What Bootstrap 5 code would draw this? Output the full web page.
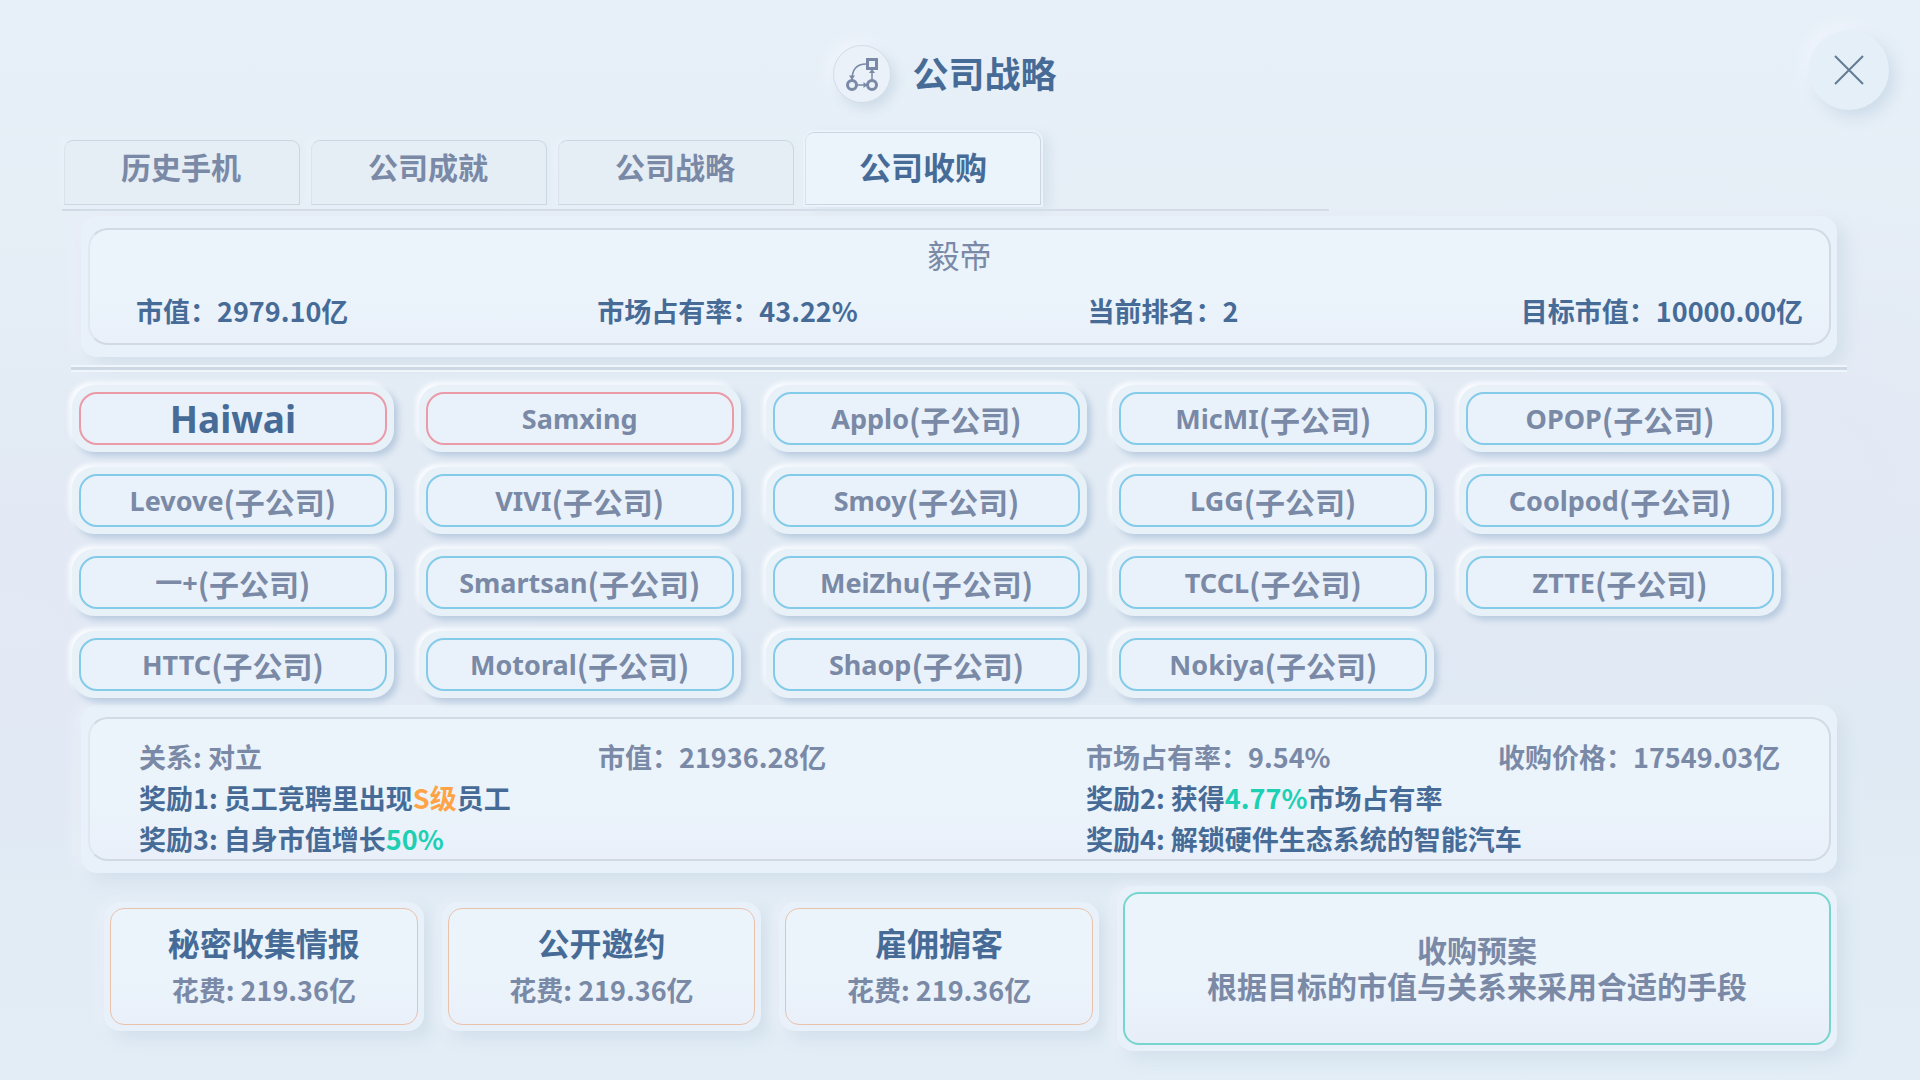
<!DOCTYPE html>
<html lang="zh-CN">
<head>
<meta charset="utf-8">
<meta name="viewport" content="width=device-width, initial-scale=1">
<title>公司战略</title>
<link href="https://cdn.jsdelivr.net/npm/bootstrap@5.3.0/dist/css/bootstrap.min.css" rel="stylesheet">
<style>
:root { --ink: #476b97; --muted: #7a89a6; --face: #ebf3fb; --line: #cdd6e2; }
body {
  font-family: "Noto Sans CJK SC", "Noto Sans", sans-serif;
  font-weight: 700; color: var(--muted); min-height: 100vh;
  background:
    radial-gradient(ellipse 900px 300px at 0% 58%, #e3e9f5 0%, rgba(227,233,245,0) 100%),
    radial-gradient(ellipse 600px 300px at 88% 44%, #e3e9f5 0%, rgba(227,233,245,0) 100%),
    linear-gradient(#e7f0f8 0%, #e6eef6 20%, #dfe9f3 60%, #e1ecf5 85%, #e2edf6 100%);
}
button { font-weight: 700; color: var(--muted); border: 0; background: none; padding: 0; }
.ink { color: var(--ink); }
.topbar { padding: 30px 31px 0 0; }
.emblem { width: 58px; height: 58px; background: #eaf1f8; border: 1px solid #d3dde9;
  box-shadow: 5px 6px 12px #cfdde9, -5px -5px 12px #f1f5fb; }
.emblem svg { display: block; }
.page-title { font-size: 36px; line-height: 40px; font-weight: 700; margin: 0; padding: 0 0 4px 22px; }
.close-btn { width: 80px; height: 80px; background: #e5eff7;
  box-shadow: 6px 7px 16px #cddcea, -5px -5px 12px #f1f5fc; }
.tabs { width: 66%; margin: 22px 0 0 62px; padding: 0 0 4px 2px; gap: 11px; border-bottom: 2px solid #cfdae5; }
.tabs .tab { flex: 0 0 236px; height: 65px; font-size: 30px; line-height: 40px; padding: 0 2px 14px 0;
  border: 1px solid #cbd6e2; border-left-color: #dae3ec; border-radius: 9px 9px 0 0; background: #e5edf5;
  box-shadow: 3px -1px 3px #e3eff3, -3px -2px 7px #ebf1f9; }
.tabs .tab.active { height: 73px; font-size: 32px; padding: 0 0 6px; color: var(--ink); background: var(--face);
  box-shadow: 0 0 0 2px #ebf2fa, 8px 3px 12px #d4e1ec; }
.plate { background: #e8f1f9; border-radius: 16px; box-shadow: 8px 8px 16px #d3e0eb, -6px 0 12px #ebeff9; }
.inset { border: 2px solid #d0d9e4; border-left-color: #dfe7f1; background: linear-gradient(#ebf3fb 60%, #e9f0f9); border-radius: 20px; }
.panels { padding-top: 5px; }
.wide-plate { margin: 0 83px 0 81px; padding: 12px 6px 12px 7px; }
.owner { font-size: 32px; line-height: 40px; font-weight: 400; padding-top: 4px; }
.facts { display: grid; grid-template-columns: 461fr 490fr 433fr 308fr; font-size: 27px; line-height: 42px; white-space: nowrap; }
.facts.own { padding: 16px 0 11px 46px; }
.facts.rival { padding: 17px 0 0 49px; line-height: 41px; grid-template-columns: 459fr 488fr 412fr 331fr; }
.wide-cell { grid-column: span 2; }
.divider { height: 7px; margin: 8px 73px 13px 71px; background: #cdd8e5; border: solid #eff5fb; border-width: 2px 0; }
.firms { display: grid; grid-template-columns: repeat(5, 1fr); gap: 15px 25px; margin: 0 139px 7px 72px; }
.firm { height: 67px; padding: 7px; border-radius: 22px; background: #e8f1f8;
  box-shadow: 4px 4px 6px #b9cbdf, -3px -3px 4px #fafcff; font-size: 27px; line-height: 40px; }
.firm > span { display: flex; align-items: center; justify-content: center; height: 100%;
  border: 2px solid #84cbea; border-radius: 18px; background: #e9f2fa; font-family: "Noto Sans", "Noto Sans CJK SC", sans-serif; }
.firm.foe > span { border-color: #eb9aa8; }
.firm .sub { font-size: 30px; font-family: "Noto Sans CJK SC", sans-serif; }
.firm.chosen { font-size: 37px; color: var(--ink); }
.deals { margin: 13px 83px 0 104px; gap: 18px; }
.deal { flex: 308 1 0; height: 129px; margin-top: 16px; padding: 6px; border-radius: 16px; }
.deal > span { display: flex; flex-direction: column; justify-content: center; height: 100%; gap: 7px;
  border: 1px solid #eac2ac; border-radius: 14px; background: linear-gradient(#ebf3fb 60%, #e9f0f9); }
.deal strong { font-size: 32px; line-height: 40px; font-weight: 700; color: var(--ink); }
.deal .cost { font-size: 27px; line-height: 42px; }
.plan { flex: 709 1 0; height: 165px; padding: 6px; font-size: 30px; line-height: 36px; }
.plan > div { height: 100%; padding-bottom: 4px; border: 2px solid #76d5cd; border-radius: 16px; background: linear-gradient(#ebf3fb 60%, #e7eef8); }
.gold { color: #ffa347; }
.teal { color: #1dd0b4; }
</style>
</head>
<body>
<header class="topbar d-flex align-items-center">
  <div class="flex-fill w-25"></div>
  <div class="d-flex align-items-center flex-shrink-0 pt-2">
    <div class="emblem rounded-circle d-flex align-items-center justify-content-center">
      <svg width="34" height="34" viewBox="0 0 34 34" fill="none" stroke="#7a89a6" aria-hidden="true">
        <rect x="22.500" y="2.500" width="9" height="9" stroke-width="3"/>
        <circle cx="7" cy="28" r="4.500" stroke-width="3"/>
        <circle cx="27" cy="28" r="4.500" stroke-width="3"/>
        <path d="M21 7C12 7 7 12 7 23M27 13v10M12 28h10" stroke-width="1.500"/>
        <path d="M4 18.500h6L7 23zM24 16h6l-3-4zM18.500 25v6l4-3z" fill="#7a89a6" stroke="none"/>
      </svg>
    </div>
    <h1 class="page-title ink">公司战略</h1>
  </div>
  <div class="flex-fill w-25 d-flex justify-content-end">
    <button type="button" class="close-btn rounded-circle d-flex align-items-center justify-content-center" aria-label="关闭">
      <svg width="30" height="30" viewBox="0 0 30 30" stroke="#637c94" stroke-width="2" aria-hidden="true"><path d="M1 1L29 29M29 1L1 29"/></svg>
    </button>
  </div>
</header>

<main>
  <div class="tabs d-flex align-items-end" role="tablist">
    <button type="button" class="tab" role="tab" aria-selected="false">历史手机</button>
    <button type="button" class="tab" role="tab" aria-selected="false">公司成就</button>
    <button type="button" class="tab" role="tab" aria-selected="false">公司战略</button>
    <button type="button" class="tab active" role="tab" aria-selected="true">公司收购</button>
  </div>

  <div class="panels">
    <section class="plate wide-plate">
      <div class="inset">
        <h2 class="owner text-center m-0">毅帝</h2>
        <div class="facts own ink">
          <div>市值：2979.10亿</div>
          <div>市场占有率：43.22%</div>
          <div>当前排名：2</div>
          <div>目标市值：10000.00亿</div>
        </div>
      </div>
    </section>

    <div class="divider"></div>

    <section class="firms">
      <button type="button" class="firm foe chosen"><span>Haiwai</span></button>
      <button type="button" class="firm foe"><span>Samxing</span></button>
      <button type="button" class="firm"><span>Applo<span class="sub">(子公司)</span></span></button>
      <button type="button" class="firm"><span>MicMI<span class="sub">(子公司)</span></span></button>
      <button type="button" class="firm"><span>OPOP<span class="sub">(子公司)</span></span></button>
      <button type="button" class="firm"><span>Levove<span class="sub">(子公司)</span></span></button>
      <button type="button" class="firm"><span>VIVI<span class="sub">(子公司)</span></span></button>
      <button type="button" class="firm"><span>Smoy<span class="sub">(子公司)</span></span></button>
      <button type="button" class="firm"><span>LGG<span class="sub">(子公司)</span></span></button>
      <button type="button" class="firm"><span>Coolpod<span class="sub">(子公司)</span></span></button>
      <button type="button" class="firm"><span>一+<span class="sub">(子公司)</span></span></button>
      <button type="button" class="firm"><span>Smartsan<span class="sub">(子公司)</span></span></button>
      <button type="button" class="firm"><span>MeiZhu<span class="sub">(子公司)</span></span></button>
      <button type="button" class="firm"><span>TCCL<span class="sub">(子公司)</span></span></button>
      <button type="button" class="firm"><span>ZTTE<span class="sub">(子公司)</span></span></button>
      <button type="button" class="firm"><span>HTTC<span class="sub">(子公司)</span></span></button>
      <button type="button" class="firm"><span>Motoral<span class="sub">(子公司)</span></span></button>
      <button type="button" class="firm"><span>Shaop<span class="sub">(子公司)</span></span></button>
      <button type="button" class="firm"><span>Nokiya<span class="sub">(子公司)</span></span></button>
    </section>

    <section class="plate wide-plate">
      <div class="inset">
        <div class="facts rival">
          <div>关系: 对立</div>
          <div>市值：21936.28亿</div>
          <div>市场占有率：9.54%</div>
          <div>收购价格：17549.03亿</div>
          <div class="wide-cell ink">奖励1: 员工竞聘里出现<span class="gold">S级</span>员工</div>
          <div class="wide-cell ink">奖励2: 获得<span class="teal">4.77%</span>市场占有率</div>
          <div class="wide-cell ink">奖励3: 自身市值增长<span class="teal">50%</span></div>
          <div class="wide-cell ink">奖励4: 解锁硬件生态系统的智能汽车</div>
        </div>
      </div>
    </section>

    <section class="deals d-flex align-items-start">
      <button type="button" class="plate deal"><span><strong>秘密收集情报</strong><span class="cost">花费: 219.36亿</span></span></button>
      <button type="button" class="plate deal"><span><strong>公开邀约</strong><span class="cost">花费: 219.36亿</span></span></button>
      <button type="button" class="plate deal"><span><strong>雇佣掮客</strong><span class="cost">花费: 219.36亿</span></span></button>
      <div class="plate plan">
        <div class="d-flex flex-column align-items-center justify-content-center">
          <div>收购预案</div>
          <div>根据目标的市值与关系来采用合适的手段</div>
        </div>
      </div>
    </section>
  </div>
</main>
<script src="https://cdn.jsdelivr.net/npm/bootstrap@5.3.0/dist/js/bootstrap.bundle.min.js"></script>
</body>
</html>
